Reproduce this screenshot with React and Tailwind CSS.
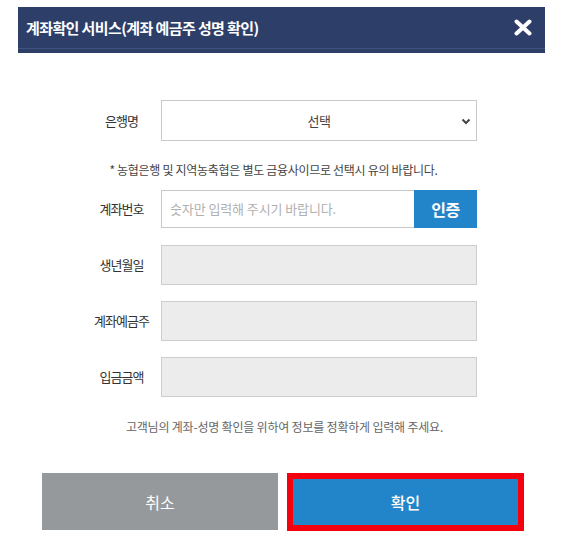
import React from "react";

const font = { fontFamily: '"Noto Sans CJK KR", "Noto Sans", sans-serif' };

function Label({ children }) {
  return (
    <div className="w-[79px] shrink-0 text-center text-[13px] tracking-[-1px] text-[#333]">
      {children}
    </div>
  );
}

function GrayRow({ label }) {
  return (
    <div className="flex items-center h-[40px]">
      <Label>{label}</Label>
      <div className="flex-1 h-[40px] bg-[#ececec] border border-[#cdcdcd]" />
    </div>
  );
}

export default function App() {
  return (
    <div className="w-[572px] h-[545px] bg-white pt-[7px]" style={font}>
      <div className="ml-[18px] w-[527px]">
        <div className="bg-[#2d3e69]">
          <div className="h-[41px] flex items-center justify-between pl-[8px] pr-[13px]">
            <div className="text-white font-bold text-[15px] tracking-[-0.6px] leading-none">
              계좌확인 서비스(계좌 예금주 성명 확인)
            </div>
            <svg width="18" height="17" viewBox="0 0 18 17">
              <path d="M2.5 2.5 L15.5 14.5 M15.5 2.5 L2.5 14.5" stroke="#fff" strokeWidth="4" strokeLinecap="round" />
            </svg>
          </div>
          <div className="h-px bg-[#40527d]" />
          <div className="h-[4px]" />
        </div>

        <div className="pl-[64px] pr-[68px] pt-[47px]">
          <div className="flex items-center h-[41px]">
            <Label>은행명</Label>
            <div className="flex-1 h-[41px] border border-[#c9c9c9] relative flex items-center justify-center">
              <span className="text-[13px] tracking-[-0.5px] text-[#444]">선택</span>
              <svg className="absolute right-[5px] top-[17px]" width="10" height="7" viewBox="0 0 10 7">
                <path d="M1.5 1.5 L5 5 L8.5 1.5" stroke="#444" strokeWidth="2" fill="none" />
              </svg>
            </div>
          </div>

          <div className="mt-[21px] text-center text-[12px] tracking-[-0.3px] text-[#444] leading-[16px] pr-[12px]">
            * 농협은행 및 지역농축협은 별도 금융사이므로 선택시 유의 바랍니다.
          </div>

          <div className="mt-[12px] flex items-center h-[38px]">
            <Label>계좌번호</Label>
            <div className="flex-1 h-[38px] flex">
              <div className="flex-1 border border-[#c9c9c9] border-r-0 flex items-center pl-[8px] text-[13px] tracking-[-0.1px] text-[#b0b0b0]">
                숫자만 입력해 주시기 바랍니다.
              </div>
              <div className="w-[63px] bg-[#2385c9] flex items-center justify-center text-white font-bold text-[16px] tracking-[-0.5px]">
                인증
              </div>
            </div>
          </div>

          <div className="mt-[17px] flex flex-col gap-[16px]">
            <GrayRow label="생년월일" />
            <GrayRow label="계좌예금주" />
            <GrayRow label="입금금액" />
          </div>
        </div>

        <div className="mt-[22px] text-center text-[12px] tracking-[-0.2px] text-[#666] leading-[16px] pl-[6px]">
          고객님의 계좌-성명 확인을 위하여 정보를 정확하게 입력해 주세요.
        </div>

        <div className="mt-[38px] flex pl-[24px] gap-[9px]">
          <div className="w-[236px] h-[57px] bg-[#96999c] flex items-center justify-center text-white text-[16px]">
            취소
          </div>
          <div className="w-[237px] h-[58px] bg-[#2385c9] border-[6px] border-[#f5000f] flex items-center justify-center text-white text-[16px] font-medium">
            확인
          </div>
        </div>
      </div>
    </div>
  );
}
